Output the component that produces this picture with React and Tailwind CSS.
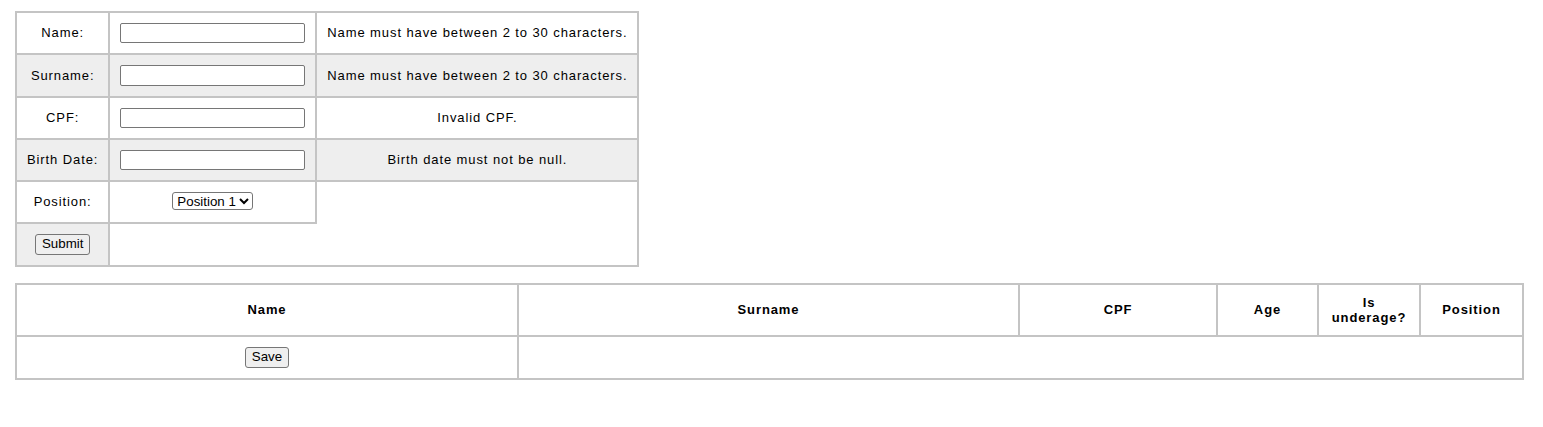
const cell = 'border-2 border-[#c4c4c4] p-[10px] text-center align-middle';

function FormRow({ label, error, shaded, children }) {
  return (
    <tr className={shaded ? 'bg-[#eeeeee]' : ''}>
      <td className={cell}>{label}</td>
      <td className={cell}>{children}</td>
      {error !== undefined && <td className={cell}>{error}</td>}
    </tr>
  );
}

function TextInput() {
  return (
    <input
      type="text"
      className="block w-[185px] h-[20.25px] px-[2px] border border-[#767676] rounded-[2px] bg-white text-[13.333px] tracking-normal"
    />
  );
}

const btn =
  'h-[21px] px-[6px] border border-[#767676] rounded-[3px] bg-[#efefef] text-[13.333px] tracking-normal text-black leading-none';

export default function App() {
  const headers = [
    { label: 'Name', w: 'w-[502px]' },
    { label: 'Surname', w: 'w-[501px]' },
    { label: 'CPF', w: 'w-[198px]' },
    { label: 'Age', w: 'w-[101px]' },
    { label: 'Is underage?', w: 'w-[102px]' },
    { label: 'Position', w: 'w-[103px]' },
  ];

  return (
    <div className="min-h-screen bg-white pt-[11px] pl-[15px] font-['Liberation_Sans',Arial,sans-serif] text-[13px] tracking-[0.9px] text-black">
      {/* Employee form */}
      <table className="border-collapse border-2 border-[#c4c4c4]">
        <tbody>
          <FormRow label="Name:" error="Name must have between 2 to 30 characters.">
            <TextInput />
          </FormRow>
          <FormRow label="Surname:" error="Name must have between 2 to 30 characters." shaded>
            <TextInput />
          </FormRow>
          <FormRow label="CPF:" error="Invalid CPF.">
            <TextInput />
          </FormRow>
          <FormRow label="Birth Date:" error="Birth date must not be null." shaded>
            <TextInput />
          </FormRow>
          <FormRow label="Position:">
            <select className="h-[18px] border border-[#767676] rounded-[3px] bg-white text-[13.333px] tracking-normal">
              <option>Position 1</option>
              <option>Position 2</option>
              <option>Position 3</option>
            </select>
          </FormRow>
          <tr>
            <td className={`${cell} bg-[#eeeeee]`}>
              <button className={btn}>Submit</button>
            </td>
          </tr>
        </tbody>
      </table>

      {/* Employee list */}
      <table className="mt-[16px] table-fixed border-collapse border-2 border-[#c4c4c4] w-[1509px]">
        <thead>
          <tr>
            {headers.map((h) => (
              <th key={h.label} className={`${cell} ${h.w} font-bold leading-[15px]`}>
                {h.label}
              </th>
            ))}
          </tr>
        </thead>
        <tbody>
          <tr>
            <td className={cell}>
              <button className={btn}>Save</button>
            </td>
            <td colSpan={5} className={cell}></td>
          </tr>
        </tbody>
      </table>
    </div>
  );
}
